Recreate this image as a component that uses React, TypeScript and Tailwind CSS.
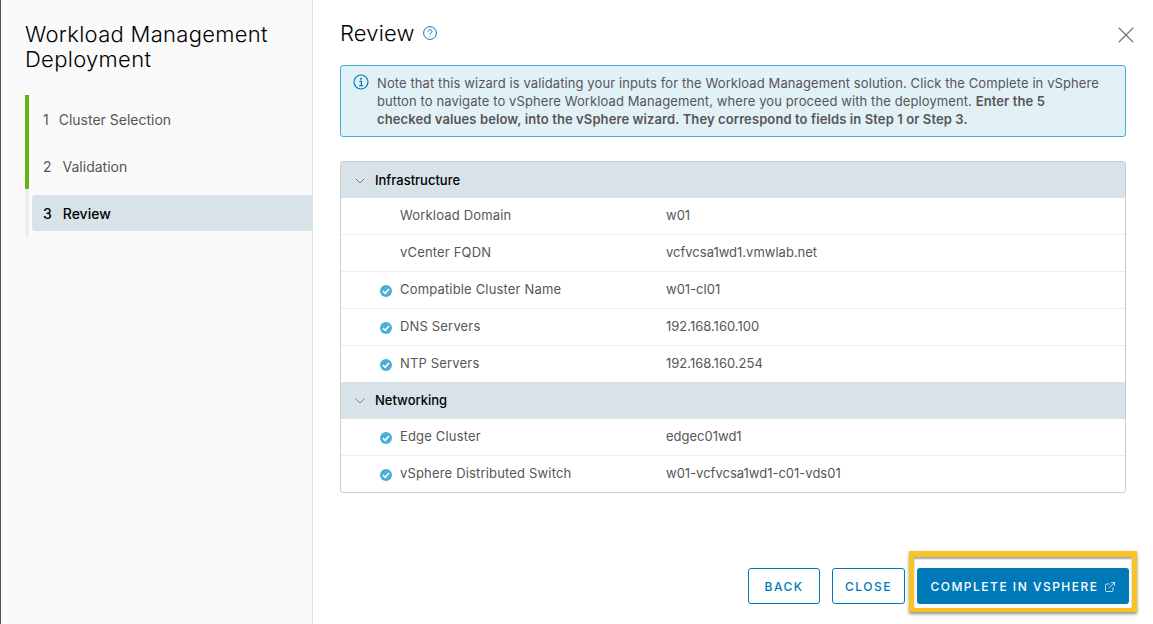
import { ChevronDown, ExternalLink, X } from "lucide-react";

interface RowData {
  label: string;
  value: string;
  checked?: boolean;
}

const infrastructure: RowData[] = [
  { label: "Workload Domain", value: "w01" },
  { label: "vCenter FQDN", value: "vcfvcsa1wd1.vmwlab.net" },
  { label: "Compatible Cluster Name", value: "w01-cl01", checked: true },
  { label: "DNS Servers", value: "192.168.160.100", checked: true },
  { label: "NTP Servers", value: "192.168.160.254", checked: true },
];

const networking: RowData[] = [
  { label: "Edge Cluster", value: "edgec01wd1", checked: true },
  { label: "vSphere Distributed Switch", value: "w01-vcfvcsa1wd1-c01-vds01", checked: true },
];

function CheckBadge() {
  return (
    <svg viewBox="0 0 12 12" className="absolute left-[39px] top-[13px] w-3 h-3">
      <circle cx="6" cy="6" r="6" fill="#49afd9" />
      <path d="M3 6.2 5.2 8.3 9 4" fill="none" stroke="#fff" strokeWidth="1.6" />
    </svg>
  );
}

function Row({ row }: { row: RowData }) {
  return (
    <div className="relative flex items-center h-[37px] pb-px border-b border-[#eeeeee] last:border-b-0 last:h-[36px] text-[13px] text-[#565656]">
      {row.checked && <CheckBadge />}
      <div className="w-[325px] pl-[59px] tracking-[0.17px]">{row.label}</div>
      <div>{row.value}</div>
    </div>
  );
}

function Section({ title, rows, headerHeight }: { title: string; rows: RowData[]; headerHeight: string }) {
  return (
    <div>
      <div className={`flex items-center ${headerHeight} pt-px bg-[#d8e3e9] text-[13px] font-medium text-black`}>
        <ChevronDown className="w-4 h-4 ml-[11px] mr-[7px] text-[#666666]" strokeWidth={1.25} />
        {title}
      </div>
      {rows.map((row) => (
        <Row key={row.label} row={row} />
      ))}
    </div>
  );
}

function Step({ num, label, active, gap }: { num: string; label: string; active?: boolean; gap: string }) {
  return (
    <div
      className={`flex items-center h-9 pt-[2px] ml-[3px] pl-[11px] rounded-l-[3px] text-sm ${gap} ${
        active ? "bg-[#d8e3e9] text-black font-medium" : "text-[#565656]"
      }`}
    >
      <span>{num}</span>
      <span>{label}</span>
    </div>
  );
}

export default function App() {
  return (
    <div className="flex w-[1153px] h-[624px] overflow-hidden bg-white font-['Inter','Liberation_Sans',sans-serif]">
      <aside className="w-[313px] shrink-0 bg-[#fafafa] border-l border-l-[#555555] border-r border-r-[#e0e0e0] pt-[22px] pl-6">
        <h1 className="text-[22px] leading-[25px] font-light tracking-[0.3px] text-black">
          Workload Management
          <br />
          Deployment
        </h1>
        <div className="relative mt-[23px] w-[287px] flex flex-col gap-[11px] border-l-4 border-[#eeeeee] py-[6px]">
          <div className="absolute -left-1 top-0 w-1 h-[94px] bg-[#60b515]" />
          <Step num="1" label="Cluster Selection" gap="gap-[10px]" />
          <Step num="2" label="Validation" gap="gap-[11px]" />
          <Step num="3" label="Review" active gap="gap-[11px]" />
        </div>
      </aside>

      <main className="relative flex-1 flex flex-col pl-[27px] pr-[27px] pt-[20px] pb-5">
        <div className="flex items-center h-[26px]">
          <h2 className="text-[22px] font-light tracking-[0.15px] text-black">Review</h2>
          <svg viewBox="0 0 14 14" className="w-[14px] h-[14px] ml-[8px]" fill="none" stroke="#0079b8">
            <circle cx="7" cy="7" r="6.4" />
            <path d="M5.2 5.6c0-2.3 3.8-2.3 3.8-.1 0 1.4-2 1.4-2 3" />
            <circle cx="7" cy="10.3" r=".5" fill="#0079b8" stroke="none" />
          </svg>
        </div>
        <X className="absolute top-[21px] right-[13px] w-7 h-7 text-[#747474]" strokeWidth={1} />

        <div className="relative mt-[19px] h-[72px] border border-[#49afd9] rounded-[3px] bg-[#e1f1f6] pl-[36px] pr-3 pt-2 text-[13px] leading-[18px] tracking-[0.1px] text-[#565656]">
          <svg viewBox="0 0 16 16" className="absolute left-[12px] top-[8px] w-4 h-4" fill="none" stroke="#0079b8">
            <circle cx="8" cy="8" r="7" strokeWidth="1.2" />
            <circle cx="8" cy="4.8" r="1" fill="#0079b8" stroke="none" />
            <path d="M6.4 7.3H8.4V11.5M6.2 11.7H10" strokeWidth="1.2" />
          </svg>
          Note that this wizard is validating your inputs for the Workload Management solution. Click the Complete in vSphere
          <br />
          button to navigate to vSphere Workload Management, where you proceed with the deployment.{" "}
          <b className="font-semibold">
            Enter the 5
            <br />
            checked values below, into the vSphere wizard. They correspond to fields in Step 1 or Step 3.
          </b>
        </div>

        <div className="mt-6 border border-[#cccccc] rounded-[3px] overflow-hidden">
          <Section title="Infrastructure" rows={infrastructure} headerHeight="h-9" />
          <Section title="Networking" rows={networking} headerHeight="h-[37px]" />
        </div>

        <div className="mt-auto flex justify-end gap-3 -mr-[3px]">
          <button className="h-9 w-[72px] pt-px border border-[#0079b8] rounded-[3px] text-[#0079b8] text-xs font-medium tracking-[1.5px]">
            BACK
          </button>
          <button className="h-9 w-[73px] pt-px border border-[#0079b8] rounded-[3px] text-[#0079b8] text-xs font-medium tracking-[1.5px]">
            CLOSE
          </button>
          <div className="relative">
            <button className="flex items-center justify-center gap-[5px] h-9 w-[212px] pt-px bg-[#0079b8] rounded-[3px] text-white text-xs font-medium tracking-[1.5px]">
              COMPLETE IN VSPHERE
              <ExternalLink className="w-3 h-3" strokeWidth={1.5} />
            </button>
            <div className="absolute -left-2 -right-2 -top-[17px] -bottom-2 border-4 border-l-[5px] border-r-[5px] border-t-[6px] border-[#f8c327] shadow-[0_2px_3px_rgba(0,0,0,0.45),inset_0_2px_2px_rgba(0,0,0,0.35)] pointer-events-none" />
          </div>
        </div>
      </main>
    </div>
  );
}
